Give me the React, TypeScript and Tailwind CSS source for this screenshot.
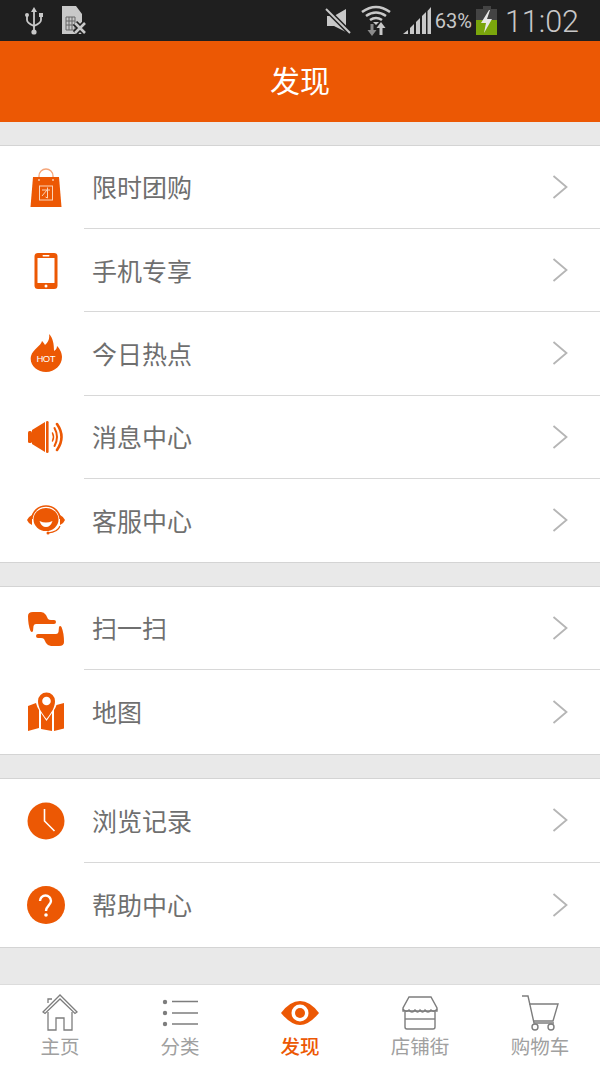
import { FC, ReactNode } from 'react'

const orange = '#ec5804'

const UsbIcon = () => (
  <svg width="18" height="28" viewBox="0 0 18 28" fill="none" stroke="#c8c8c8" strokeWidth="1.800">
    <path d="M9 3v22" />
    <path d="M9 0l3 5H6z" fill="#c8c8c8" stroke="none" />
    <path d="M2 9v4q0 3 7 6q7-3 7-6V9" />
    <circle cx="2" cy="8" r="2" fill="#c8c8c8" stroke="none" />
    <rect x="14" y="6" width="4" height="4" fill="#c8c8c8" stroke="none" />
    <circle cx="9" cy="25" r="2.600" fill="#c8c8c8" stroke="none" />
  </svg>
)

const SimIcon = () => (
  <svg width="25" height="29" viewBox="0 0 25 29">
    <path d="M0 0h14l6 8v20H0z" fill="#c8c8c8" />
    <path d="M4 11h9v13H4z M7 11v13 M10 11v13 M4 15h9 M4 19h9" fill="none" stroke="#666" strokeWidth="1" />
    <path d="M13 17l10 10M23 17L13 27" stroke="#1f1f1f" strokeWidth="6" />
    <path d="M13 17l10 10M23 17L13 27" stroke="#c8c8c8" strokeWidth="2.600" />
  </svg>
)

const MuteIcon = () => (
  <svg width="26" height="26" viewBox="0 0 26 26">
    <path d="M2 8h7l12-7v23L9 18H2z" fill="#c8c8c8" />
    <path d="M1 1l24 24" stroke="#1f1f1f" strokeWidth="5" />
    <path d="M1 1l24 24" stroke="#c8c8c8" strokeWidth="2" />
  </svg>
)

const WifiIcon = () => (
  <svg width="30" height="31" viewBox="0 0 30 31" fill="none" stroke="#c8c8c8" strokeWidth="2.600">
    <path d="M1 7q14-10 28 0" />
    <path d="M5 11q10-7 20 0" />
    <path d="M9 15q6-4 12 0" />
    <path d="M12 17l3 3 3-3z" fill="#c8c8c8" stroke="none" />
    <path d="M11 19v7" stroke="#8a8a8a" strokeWidth="3" />
    <path d="M6.500 25h9L11 31z" fill="#8a8a8a" stroke="none" />
    <path d="M20 21v9" strokeWidth="3" />
    <path d="M15.500 23h9L20 17z" fill="#c8c8c8" stroke="none" />
  </svg>
)

const SignalIcon = () => (
  <svg width="28" height="28" viewBox="0 0 28 28" fill="#c8c8c8">
    <path d="M0 27l5-4v4z" />
    <path d="M7 21l4-4v10H7z" />
    <path d="M13 15l4-4v16h-4z" />
    <path d="M19 9l4-4v22h-4z" />
    <path d="M24.500 4L28 0v27h-3.500z" />
  </svg>
)

const BatteryIcon = () => (
  <svg width="22" height="30" viewBox="0 0 22 30">
    <rect x="7" y="0" width="8" height="3" fill="#444" />
    <rect x="0" y="3" width="21" height="13" fill="#444" />
    <rect x="0" y="14" width="21" height="15" fill="#7aa60c" />
    <path d="M13 4L5 17h5l-2 10 8-14h-5l3-9z" fill="#e8e8e8" />
  </svg>
)

const BagIcon = () => (
  <svg width="32" height="40" viewBox="0 0 32 40">
    <path d="M9 11V8a7 7 0 0 1 14 0v3" fill="none" stroke="#f5a67a" strokeWidth="1.300" />
    <path d="M3 9h26l2.500 30H.5z" fill={orange} />
    <circle cx="9" cy="12" r="1" fill="#f8c8a8" />
    <circle cx="23" cy="12" r="1" fill="#f8c8a8" />
    <rect x="9.500" y="18" width="13" height="14" fill="none" stroke="#fbd3b8" strokeWidth="1" />
    <path d="M12 22h8M17.500 19.500V30l-2-1M17 22l-5 6" fill="none" stroke="#fbd3b8" strokeWidth="1" />
  </svg>
)

const PhoneIcon = () => (
  <svg width="24" height="36" viewBox="0 0 24 36">
    <rect x="0.500" y="0" width="23" height="36" rx="3.500" fill={orange} />
    <rect x="3.500" y="5" width="17" height="25" fill="#fff" />
    <rect x="8.500" y="2" width="7" height="1.500" rx="0.700" fill="#fff" />
    <circle cx="12" cy="33" r="1.500" fill="#fff" />
  </svg>
)

const FlameIcon = () => (
  <svg width="32" height="38" viewBox="0 0 32 38" className="-translate-y-[1px]">
    <path
      d="M19 0c1 5-1 8-4 11-1-2-2-3-3-4-1 5-9 8-11 15-2 9 6 16 15 16s16-7 16-15c0-5-3-9-5-11 0 2-1 4-3 5 0-7-1-13-5-17z"
      fill={orange}
    />
    <text x="16" y="28" textAnchor="middle" fontSize="9.500" fill="#fff" textLength="19" fontFamily="'Liberation Sans', sans-serif">
      HOT
    </text>
  </svg>
)

const SpeakerIcon = () => (
  <svg width="36" height="32" viewBox="0 0 36 32">
    <rect x="0" y="10" width="4" height="12" rx="1.500" fill={orange} />
    <path d="M4 9l13-8v30L4 23z" fill={orange} />
    <rect x="18" y="0" width="2.600" height="32" rx="1.300" fill={orange} />
    <path d="M24.500 12q2 4 0 8" fill="none" stroke={orange} strokeWidth="1.500" strokeLinecap="round" />
    <path d="M26.500 7q5 9 0 18" fill="none" stroke={orange} strokeWidth="2" strokeLinecap="round" />
    <path d="M29 3q9 13 0 26" fill="none" stroke={orange} strokeWidth="2.600" strokeLinecap="round" />
  </svg>
)

const ServiceIcon = () => (
  <svg width="38" height="30" viewBox="0 0 38 30">
    <path d="M5 14a14 13 0 0 1 28 0" fill="none" stroke={orange} strokeWidth="1.600" />
    <path d="M5 10Q1 12 0 15q1 3 5 5z" fill={orange} />
    <path d="M33 10q4 2 5 5-1 3-5 5z" fill={orange} />
    <ellipse cx="19" cy="14.500" rx="12.500" ry="11.500" fill={orange} />
    <path d="M12.500 16q6.500 3 13 0q-2 6-6.500 6t-6.500-6z" fill="#fff" />
    <path d="M33 21q-2 6-12 7" fill="none" stroke={orange} strokeWidth="1.200" />
    <circle cx="21" cy="28" r="1.500" fill={orange} />
  </svg>
)

const scanHalf = 'M0 5Q0 1 5 1h8q3 0 5 3l2 4q1 1 3 1h3q2 0 2 2t-2 2H8q-2 0-2.500 2L5 20q-1 2-2.500 0Q0 14 0 5z'

const ScanIcon = () => (
  <svg width="36" height="36" viewBox="0 0 36 36" fill={orange}>
    <path d={scanHalf} />
    <path d={scanHalf} transform="rotate(180 18 18)" />
  </svg>
)

const MapIcon = () => (
  <svg width="36" height="40" viewBox="0 0 36 40" fill={orange}>
    <path d="M0 14l8-3q1 4 3 7v18L0 39z" />
    <path d="M13 21l5.500 8 5.500-8v18l-11-2z" />
    <path d="M26 18q1.500-2 2.500-5l7.500-2v25.500L26 39z" />
    <path d="M18.500 27C13 20 10 15 10 9a8.500 8.500 0 0 1 17 0c0 6-3 11-8.500 18z" />
    <circle cx="18.500" cy="9" r="4.300" fill="#fff" />
  </svg>
)

const ClockIcon = () => (
  <svg width="38" height="38" viewBox="0 0 38 38">
    <circle cx="19" cy="19" r="18.500" fill={orange} />
    <path d="M17.500 7v12l10 10" fill="none" stroke="#fff" strokeWidth="1.600" />
  </svg>
)

const HelpIcon = () => (
  <svg width="38" height="38" viewBox="0 0 38 38">
    <circle cx="19" cy="19" r="19" fill={orange} />
    <path d="M13 15a5.500 5.500 0 0 1 11 0c0 4-5 5-5 10" fill="none" stroke="#fff" strokeWidth="2.400" />
    <circle cx="19" cy="29" r="1.800" fill="#fff" />
  </svg>
)

const Chevron = () => (
  <svg width="16" height="24" viewBox="0 0 16 24" fill="none" stroke="#b5b5b5" strokeWidth="1.800">
    <path d="M1.500 1l13 11-13 11" />
  </svg>
)

const HomeIcon = () => (
  <svg width="36" height="37" viewBox="0 0 36 37" fill="none" stroke="#7d7d7d" strokeWidth="1.300">
    <path d="M1 18L18 1l17 17-2 1.500L18 5 3 19.500z" />
    <path d="M6 9V5h4" />
    <path d="M6 18v18h8V24h8v12h8V18" />
  </svg>
)

const ListIcon = () => (
  <svg width="36" height="28" viewBox="0 0 36 28">
    <g fill="#7d7d7d">
      <circle cx="3" cy="3" r="2.200" />
      <circle cx="3" cy="14" r="2.200" />
      <circle cx="3" cy="25" r="2.200" />
    </g>
    <path d="M10 2.500h26M10 14h26M10 25h26" stroke="#7d7d7d" strokeWidth="1.600" />
  </svg>
)

const EyeIcon = () => (
  <svg width="38" height="26" viewBox="0 0 38 26">
    <path d="M0 13Q9 1 19 1t19 12Q28 25 19 25T0 13z" fill={orange} />
    <circle cx="19" cy="13" r="8.500" fill="#fff" />
    <circle cx="19" cy="13" r="5" fill={orange} />
  </svg>
)

const StoreIcon = () => (
  <svg width="36" height="34" viewBox="0 0 36 34" fill="none" stroke="#7d7d7d" strokeWidth="1.400">
    <path d="M7 1h22l6 11v3H1v-3z" />
    <path d="M1 13q3 4 6 1 3 4 6 0 3 4 5 0 3 4 5 0 3 4 6 0 3 3 6-1" />
    <path d="M3 16v15q0 2 2 2h26q2 0 2-2V16" />
    <path d="M3 23h30" />
  </svg>
)

const CartIcon = () => (
  <svg width="38" height="36" viewBox="0 0 38 36" fill="none" stroke="#7d7d7d" strokeWidth="1.400">
    <path d="M1 1h6l6 27h20" />
    <path d="M8 9h29l-5 17H12" />
    <circle cx="14" cy="32" r="3" />
    <circle cx="30" cy="32" r="3" />
  </svg>
)

interface IMenuRow {
  label: string
  icon: ReactNode
}

interface IMenuSection {
  rowClass: string
  rows: IMenuRow[]
}

const sections: IMenuSection[] = [
  {
    rowClass: 'h-[83.2px]',
    rows: [
      { label: '限时团购', icon: <BagIcon /> },
      { label: '手机专享', icon: <PhoneIcon /> },
      { label: '今日热点', icon: <FlameIcon /> },
      { label: '消息中心', icon: <SpeakerIcon /> },
      { label: '客服中心', icon: <ServiceIcon /> },
    ],
  },
  {
    rowClass: 'h-[83.5px]',
    rows: [
      { label: '扫一扫', icon: <ScanIcon /> },
      { label: '地图', icon: <MapIcon /> },
    ],
  },
  {
    rowClass: 'h-[84px]',
    rows: [
      { label: '浏览记录', icon: <ClockIcon /> },
      { label: '帮助中心', icon: <HelpIcon /> },
    ],
  },
]

const tabs = [
  { label: '主页', icon: <HomeIcon /> },
  { label: '分类', icon: <ListIcon /> },
  { label: '发现', icon: <EyeIcon />, active: true },
  { label: '店铺街', icon: <StoreIcon /> },
  { label: '购物车', icon: <CartIcon /> },
]

const MenuSection: FC<IMenuSection> = ({ rowClass, rows }) => (
  <div className="bg-white border-y border-[#d4d4d4]">
    {rows.map((row, index) => (
      <div key={row.label} className={`flex items-stretch ${rowClass}`}>
        <div className="flex w-[92px] shrink-0 items-center pl-[8px]">
          <div className="flex w-[76px] justify-center">{row.icon}</div>
        </div>
        <div
          className={`ml-[-8px] flex flex-1 items-center justify-between pl-[8px] pr-[32px] ${
            index < rows.length - 1 ? 'border-b border-[#d8d8d8]' : ''
          }`}
        >
          <span className="pt-[4px] text-[25px] text-[#6f6f6f]">{row.label}</span>
          <Chevron />
        </div>
      </div>
    ))}
  </div>
)

export default function App() {
  return (
    <div
      className="flex h-[1067px] w-[600px] flex-col overflow-hidden bg-[#e9e9e9]"
      style={{ fontFamily: "Roboto, 'Noto Sans CJK SC', sans-serif" }}
    >
      <div className="flex h-[41px] shrink-0 items-center bg-[#1f1f1f] pl-[25px] pr-[21px]">
        <UsbIcon />
        <div className="ml-[19px]">
          <SimIcon />
        </div>
        <div className="ml-auto">
          <MuteIcon />
        </div>
        <div className="ml-[10px]">
          <WifiIcon />
        </div>
        <div className="ml-[12px]">
          <SignalIcon />
        </div>
        <span className="ml-[4px] text-[20px] text-[#c8c8c8]">63%</span>
        <div className="ml-[4px]">
          <BatteryIcon />
        </div>
        <span className="ml-[7px] pt-[3px] text-[30.5px] font-light text-[#c8c8c8]">11:02</span>
      </div>

      <div className="flex h-[81px] shrink-0 items-center justify-center bg-[#ec5804] text-[30px] text-white">
        发现
      </div>

      <div className="flex flex-1 flex-col gap-[23px] pt-[23px]">
        {sections.map((section) => (
          <MenuSection key={section.rows[0].label} {...section} />
        ))}
      </div>

      <div className="grid h-[83px] shrink-0 grid-cols-5 border-t border-[#dcdcdc] bg-white">
        {tabs.map((tab) => (
          <div key={tab.label} className="flex flex-col items-center">
            <div className="flex h-[51px] items-center justify-center pt-[4px]">{tab.icon}</div>
            <span className={`text-[19.5px] leading-[24px] ${tab.active ? 'font-medium text-[#ec5804]' : 'text-[#a0a0a0]'}`}>
              {tab.label}
            </span>
          </div>
        ))}
      </div>
    </div>
  )
}
